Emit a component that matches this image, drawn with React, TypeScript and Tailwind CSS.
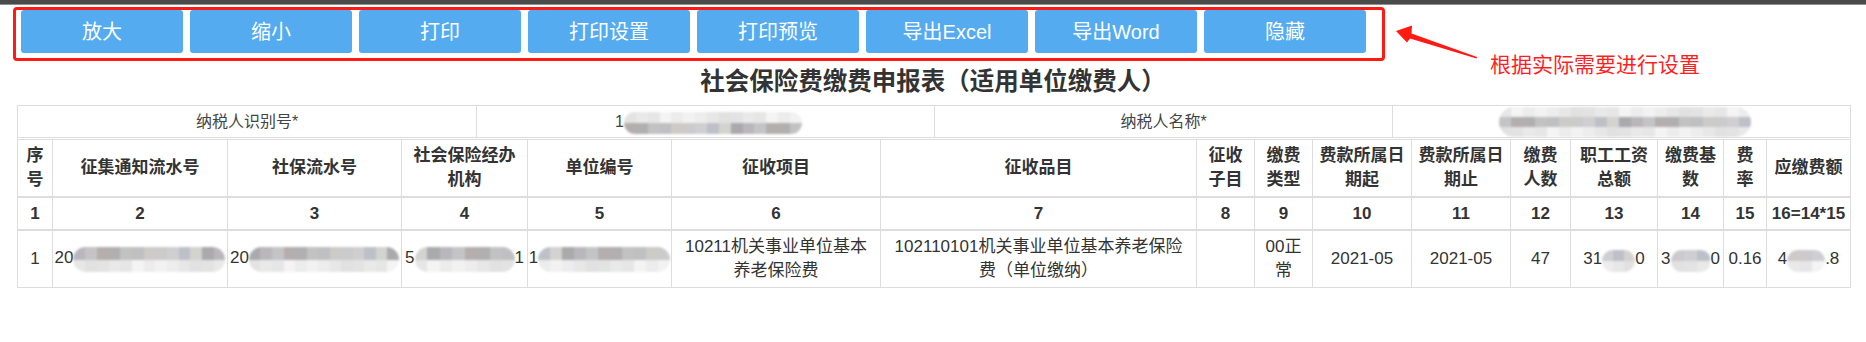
import React from 'react'

const DARK = ['#c4c4c6', '#cfcfd2', '#b1afb0', '#d3d3cf', '#c0bfc1', '#b9b7bc', '#cbcbcb', '#b5aeaf', '#bec0c8', '#c2c2c2', '#aaa9ac', '#cccbc8']
const LIGHT = ['#e6e6e6', '#ededed', '#e9e9e9', '#f2f2f2', '#e3e3e3', '#ececec', '#e1e1e1', '#f4f4f4', '#e7e7e8']

// pixelated masking block used to hide sensitive numbers
function Mosaic({ w, h, seed = 0, layout = 'dl', className = '' }: { w: number; h: number; seed?: number; layout?: string; className?: string }) {
  const n = Math.max(2, Math.round(w / 12))
  const rows = layout.split('').map((kind, r) =>
    Array.from({ length: n }, (_, i) => {
      const pal = kind === 'd' ? DARK : LIGHT
      return pal[(i * 7 + seed * 5 + r * 3) % pal.length]
    })
  )
  return (
    <span className={`inline-block overflow-hidden rounded-full blur-[0.8px] ${className}`} style={{ width: w, height: h }}>
      <span className="flex h-full flex-col">
        {rows.map((row, r) => (
          <span key={r} className="flex flex-1">
            {row.map((c, i) => (
              <span key={i} className="flex-1" style={{ background: c }} />
            ))}
          </span>
        ))}
      </span>
    </span>
  )
}

const buttons = ['放大', '缩小', '打印', '打印设置', '打印预览', '导出Excel', '导出Word', '隐藏']

const headers: React.ReactNode[] = [
  <>序<br />号</>,
  '征集通知流水号',
  '社保流水号',
  <>社会保险经办<br />机构</>,
  '单位编号',
  '征收项目',
  '征收品目',
  <>征收<br />子目</>,
  <>缴费<br />类型</>,
  <>费款所属日<br />期起</>,
  <>费款所属日<br />期止</>,
  <>缴费<br />人数</>,
  <>职工工资<br />总额</>,
  <>缴费基<br />数</>,
  <>费<br />率</>,
  '应缴费额',
]

const numbers = ['1', '2', '3', '4', '5', '6', '7', '8', '9', '10', '11', '12', '13', '14', '15', '16=14*15']

const row: React.ReactNode[] = [
  '1',
  <span className="whitespace-nowrap">20<Mosaic w={152} h={25} seed={1} className="align-[-9px]" /></span>,
  <span className="whitespace-nowrap">20<Mosaic w={150} h={25} seed={2} className="align-[-9px]" /></span>,
  <span className="whitespace-nowrap">5<Mosaic w={100} h={25} seed={3} className="align-[-9px]" />1</span>,
  <span className="whitespace-nowrap">1<Mosaic w={132} h={25} seed={4} className="align-[-9px]" /></span>,
  <>10211机关事业单位基本<br />养老保险费</>,
  <>102110101机关事业单位基本养老保险<br />费（单位缴纳）</>,
  '',
  <>00正<br />常</>,
  '2021-05',
  '2021-05',
  '47',
  <span className="whitespace-nowrap">31<Mosaic w={33} h={22} seed={5} className="align-[-8px]" />0</span>,
  <span className="whitespace-nowrap">3<Mosaic w={40} h={22} seed={6} className="align-[-8px]" />0</span>,
  '0.16',
  <span className="whitespace-nowrap">4<Mosaic w={38} h={22} seed={7} className="align-[-8px]" />.8</span>,
]

const cell = 'flex items-center justify-center text-center border-r border-[#ddd] whitespace-nowrap'

export default function App() {
  return (
    <div className="min-h-[342px] w-[1866px] bg-white text-[#333] font-['Liberation_Sans','Noto_Sans_CJK_SC',sans-serif]">
      <div className="relative">
        <div className="h-[5px] bg-[#4a4a4a] border-b border-[#8e8e8e]" />

        {/* toolbar, outlined in red */}
        <div className="ml-[13px] mt-[2px] w-[1372px] rounded-[4px] border-[3px] border-[#ff1a12] pl-[5px] pb-[5px] flex gap-[7px]">
          {buttons.map((b) => (
            <button key={b} className="w-[162px] h-[43px] rounded-[3px] bg-[#55abf0] text-white text-[20px] leading-none">
              {b}
            </button>
          ))}
        </div>

        <svg className="absolute left-[1390px] top-[20px]" width="95" height="45" viewBox="0 0 95 45">
          <polygon points="6,11 22,5.5 21.5,13.5 87,37 86.5,38.5 20,18.5 17,22.5" fill="#ff1a12" />
        </svg>
        <div className="absolute left-[1490px] top-[54px] text-[21px] leading-[21px] text-[#ff1f1f] whitespace-nowrap">
          根据实际需要进行设置
        </div>
      </div>

      <h1 className="mt-[4px] h-[34px] leading-[34px] text-center text-[24.5px] font-bold text-[#333]">
        社会保险费缴费申报表（适用单位缴费人）
      </h1>

      {/* taxpayer info */}
      <div className="ml-[17px] mt-[6px] w-[1834px] grid grid-cols-[459px_458px_458px_458px] border-l border-t border-[#ddd] text-[16px] text-[#444]">
        <div className={`${cell} h-[32px] border-b`}>纳税人识别号*</div>
        <div className={`${cell} h-[32px] border-b`}>
          <span className="pl-[6px] whitespace-nowrap">1<Mosaic w={178} h={22} seed={8} layout="ld" className="align-[-7px]" /></span>
        </div>
        <div className={`${cell} h-[32px] border-b`}>纳税人名称*</div>
        <div className={`${cell} h-[32px] border-b`}>
          <span className="pl-[6px]"><Mosaic w={252} h={30} seed={9} layout="ldl" className="align-middle" /></span>
        </div>
      </div>

      {/* declaration detail */}
      <div className="ml-[17px] mt-[1px] w-[1834px] grid grid-cols-[35px_175px_174px_126px_144px_209px_316px_58px_58px_99px_99px_60px_87px_66px_43px_84px] border-l border-t border-[#ddd] text-[17px] leading-[24px]">
        {headers.map((h, i) => (
          <div key={'h' + i} className={`${cell} h-[58px] border-b-2 font-bold`}>{h}</div>
        ))}
        {numbers.map((n, i) => (
          <div key={'n' + i} className={`${cell} h-[33px] border-b-2 font-bold`}>{n}</div>
        ))}
        {row.map((v, i) => (
          <div key={'r' + i} className={`${cell} h-[57px] border-b`}>{v}</div>
        ))}
      </div>
    </div>
  )
}
